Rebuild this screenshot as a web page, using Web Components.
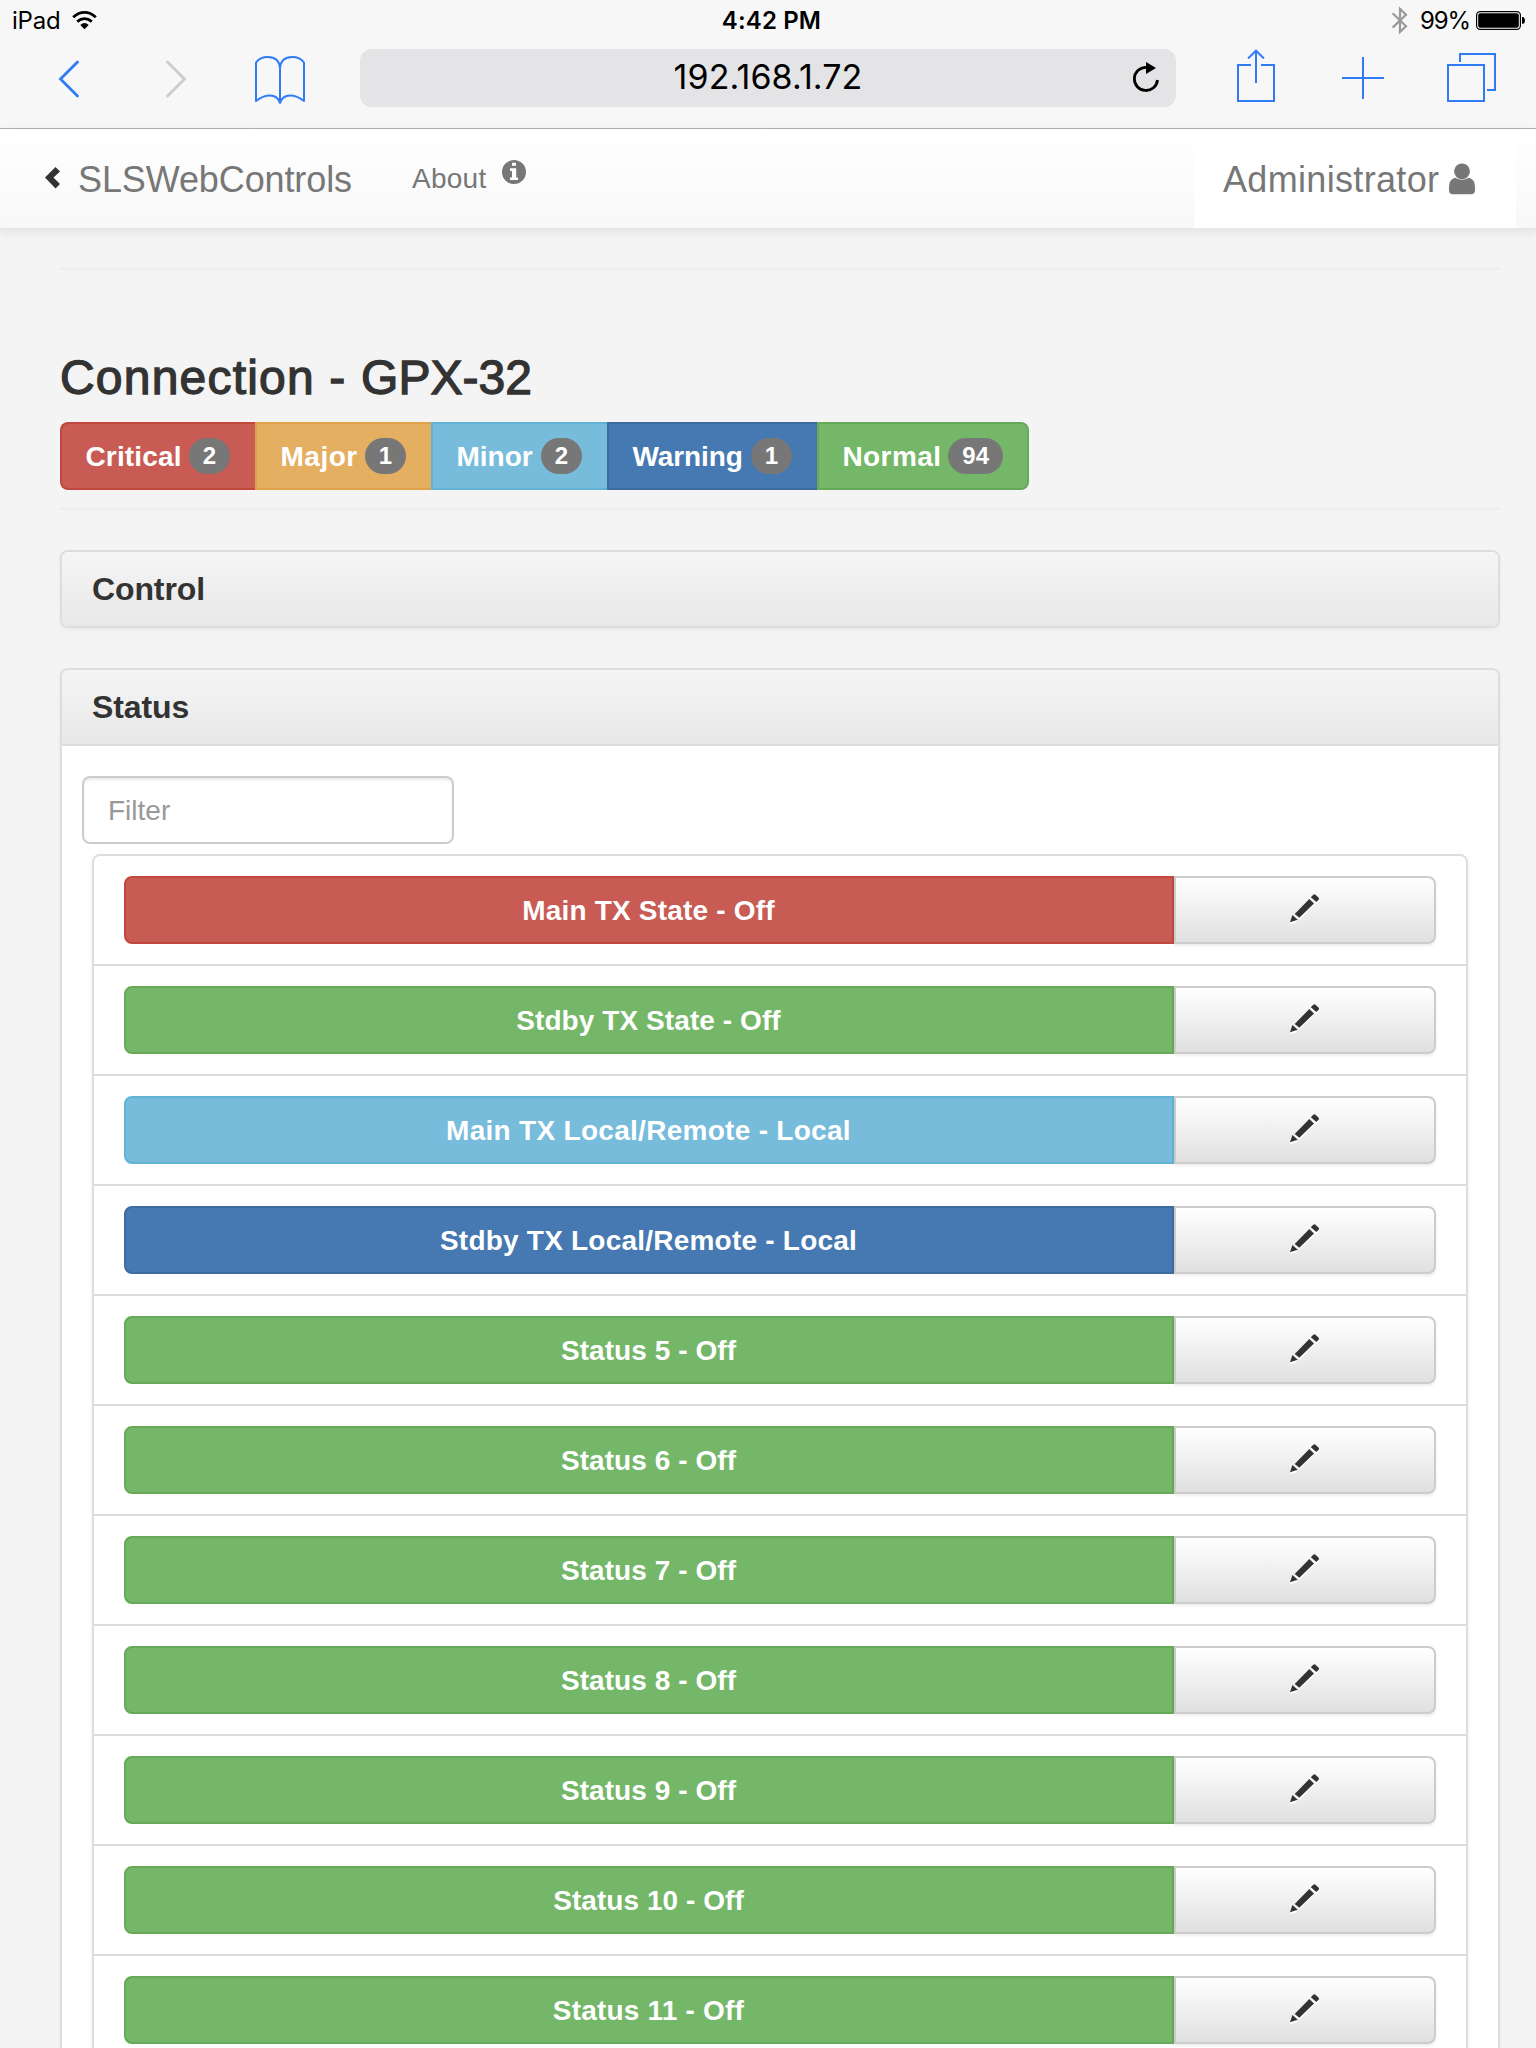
<!DOCTYPE html>
<html lang="en">
<head>
<meta charset="utf-8">
<title>SLSWebControls</title>
<style>
html,body{margin:0;padding:0}
body{width:1536px;height:2048px;overflow:hidden;background:#f4f4f4;color:#333;font-family:"Liberation Sans",Arial,sans-serif;font-size:28px}
</style>
</head>
<body>
<sls-app></sls-app>
<script>
const define = (name, html, setup) => {
  const tpl = document.createElement('template');
  tpl.innerHTML = html;
  customElements.define(name, class extends HTMLElement {
    connectedCallback() {
      if (this.shadowRoot) return;
      const root = this.attachShadow({ mode: 'open' });
      root.append(tpl.content.cloneNode(true));
      if (setup) setup(this, root);
    }
  });
};

define('ios-status-bar', `
<style>
:host{display:flex;height:40px;align-items:center;justify-content:space-between;background:#f7f7f7;color:#000;font:400 24px/40px Inter,sans-serif;white-space:pre}
.side{flex:1 1 0;display:flex;align-items:center}
.side span,.time{padding-top:2px}
.left{padding-left:12px}
.right{justify-content:flex-end;padding-right:10px}
.name{letter-spacing:-.2px;margin-right:10px}
.time{font-weight:600;letter-spacing:.15px;padding-left:5px}
.pct{letter-spacing:-1.1px;margin:0 6px 0 11px}
svg{display:block;flex:none}
</style>
<div class="side left"><span class="name">iPad</span>
<svg width="26" height="40" viewBox="71 0 26 40" fill="none" stroke="#000"><path d="M73.2 17.2Q78.5 12.4 84.5 12.4T95.8 17.2" stroke-width="2.9"/><path d="M77.2 21.6Q80.6 18.7 84.5 18.7T91.8 21.6" stroke-width="2.8"/><path d="M80.3 25Q84.5 21.2 88.7 25L84.5 29.2Z" fill="#000" stroke="none"/></svg></div>
<span class="time">4:42 PM</span>
<div class="side right">
<svg width="18" height="40" viewBox="1391 0 18 40"><path d="M1392.600 13.200L1406 26.200 1400 32V8.800L1406 14.800 1392.600 27.600" fill="none" stroke="#999" stroke-width="2.200"/></svg>
<span class="pct">99%</span>
<svg width="50" height="40" viewBox="1476 0 50 40"><rect x="1476.6" y="11.6" width="43.8" height="17.8" rx="3.6" fill="#fff" stroke="#000" stroke-width="1.2"/><rect x="1478.2" y="13.2" width="40.6" height="14.6" rx="2" fill="#000"/><path d="M1522 17h1.2q1.8 1 1.8 3.4t-1.8 3.4h-1.2z"/></svg>
</div>`);

define('safari-toolbar', `
<style>
:host{display:flex;height:88px;box-sizing:content-box;border-bottom:1px solid #b0b0b0;background:#f7f7f7;color:#000}
svg{display:block;flex:none;fill:none;stroke:#327bf6;stroke-width:2}
.url{flex:none;width:816px;height:58px;margin-top:9px;border-radius:12px;background:#e4e4e6;display:flex;align-items:center;box-sizing:border-box;padding-left:60px}
.url span{flex:1;text-align:center;font:400 34px/54px Inter,sans-serif;letter-spacing:.1px;padding:0 0 2px 0}
</style>
<svg width="130" height="88" viewBox="0 40 130 88"><path d="M77.500 62L60.500 79 77.500 96" stroke-width="2.800" stroke-linecap="round"/></svg>
<svg width="100" height="88" viewBox="130 40 100 88"><path d="M167.500 62L184.500 79 167.500 96" stroke="#ccc" stroke-width="2.800" stroke-linecap="round"/></svg>
<svg width="130" height="88" viewBox="230 40 130 88"><path d="M280 103V68Q279 57 268 57Q260 57 256 62.5V101Q263 95.6 270 95.6Q277.500 95.600 280 103Q282.5 95.6 290 95.600Q297 95.600 304 101V62.500Q300 57 292 57Q281 57 280 68" stroke-linejoin="round"/></svg>
<div class="url"><span>192.168.1.72</span>
<svg width="60" height="58" viewBox="1116 49 60 58"><path d="M1157.500 80A11.600 11.600 0 1 1 1146 67.300" stroke="#000" stroke-width="2.800"/><path d="M1146 62L1156 68 1146 74Z" fill="#000" stroke="none"/></svg></div>
<svg width="129" height="88" viewBox="1176 40 129 88"><path d="M1251 65H1238V101H1274V65H1261M1256 83V51M1248 58.500L1256 50.700 1264 58.500"/></svg>
<svg width="120" height="88" viewBox="1305 40 120 88"><path d="M1342 78H1384M1363 57V99"/></svg>
<svg width="111" height="88" viewBox="1425 40 111 88"><path d="M1448 65H1484V101H1448ZM1460 62V54H1495V90H1487"/></svg>`);

define('sls-navbar', `
<style>
:host{display:flex;height:99px;border-bottom:2px solid #e7e7e7;background:linear-gradient(#fff,#f8f8f8);box-shadow:0 2px 10px rgba(0,0,0,.075);color:#777;align-items:stretch}
.brand,.about{display:flex;align-items:center}
.brand{padding-left:45px;font-size:36px;letter-spacing:-.11px}
.brand svg{margin-bottom:2px}
.brand span{padding:2px 0 0 17px}
.about{padding-left:60px;font-size:28px;letter-spacing:.28px}
.about svg{margin:0 0 13px 15px}
.user{margin-left:auto;margin-right:20px;width:322px;box-sizing:border-box;padding-left:29px;background:#fff;display:flex;align-items:center;font-size:36px;letter-spacing:.33px}
.user span{padding-top:2px}
.user svg{margin-left:10px}
svg{display:block;flex:none}
</style>
<div class="brand"><svg width="16" height="22" viewBox="0 0 16 22"><path d="M0 10.500L10.500 0 15 4.500 8.500 10.500 15 17 10.500 21.500Z" fill="#333"/></svg><span>SLSWebControls</span></div>
<div class="about"><span>About</span><svg width="24" height="24" viewBox="0 0 24 24"><circle cx="12" cy="12" r="12" fill="#777"/><path d="M10 2.800h4v3h-4zM8 8.200h6.200v9.200h1.800v2.600H8v-2.600h2v-6.400H8z" fill="#fff"/></svg></div>
<div class="user"><span>Administrator</span><svg width="26" height="32" viewBox="0 0 26 32"><circle cx="13" cy="8.300" r="7.900" fill="#777"/><path d="M6 14.800Q13 18.800 20 14.800Q26 16.300 26 24V27.500Q26 31.200 22 31.200H4Q0 31.200 0 27.500V24Q0 16.300 6 14.800Z" fill="#777"/></svg></div>`);

const TONES = `
[tone=critical]{--bg:#c85c54;--bd:#c0483f}
[tone=major]{--bg:#e4af61;--bd:#e0a14b}
[tone=minor]{--bg:#77bcdb;--bd:#62b2d5}
[tone=warning]{--bg:#4678b1;--bd:#3f6ba0}
[tone=normal]{--bg:#74b768;--bd:#67a959}`;

define('severity-tab', `
<style>
:host{display:flex;flex:none;box-sizing:border-box;height:68px;padding-left:23.5px;align-items:center;background:var(--bg);border:2px solid var(--bd);border-right-width:0;color:#fff;font-weight:700;font-size:28px;white-space:nowrap}
:host(:first-child){border-radius:8px 0 0 8px}
:host(:last-child){border-right-width:2px;border-radius:0 8px 8px 0}
span{padding-top:2px}
b{display:block;height:36px;min-width:41px;box-sizing:border-box;padding:0 14px;border-radius:20px;background:#777;font-size:24px;line-height:36px;text-align:center;margin-left:auto;margin-right:25px}
:host(:last-child) b{margin-right:24px}
</style><span><slot></slot></span><b></b>`, (el, root) => {
  el.style.width = el.getAttribute('width') + 'px';
  el.style.letterSpacing = el.getAttribute('tracking') + 'px';
  const b = root.querySelector('b');
  b.textContent = el.getAttribute('count');
  b.style.letterSpacing = '0';
});

define('sls-panel', `
<style>
:host{display:block;box-sizing:border-box;border:2px solid #ddd;border-radius:8px;background:#fff;box-shadow:0 2px 4px rgba(0,0,0,.05)}
header{height:74px;line-height:74px;padding-left:30px;border-radius:6px;background:linear-gradient(#f5f5f5,#e8e8e8);font-size:32px;font-weight:700;letter-spacing:-.12px}
:host([open]) header{border-radius:6px 6px 0 0;border-bottom:2px solid #ddd}
</style><header></header><slot></slot>`, (el, root) => {
  root.querySelector('header').textContent = el.getAttribute('heading');
});

define('filter-field', `
<style>
:host{display:block;box-sizing:border-box;width:372px;height:68px;border:2px solid #ccc;border-radius:8px;padding-left:24px;line-height:66px;color:#999;background:#fff;box-shadow:inset 0 2px 2px rgba(0,0,0,.075)}
</style><slot></slot>`);

define('status-list', `
<style>
:host{display:flex;flex-direction:column;box-sizing:border-box;border:2px solid #ddd;border-radius:8px;box-shadow:0 2px 4px rgba(0,0,0,.05)}
</style><slot></slot>`);

define('status-row', `
<style>
${TONES}
:host{display:flex;flex:none;box-sizing:border-box;height:110px;padding:20px 30px;border-bottom:2px solid #ddd}
.state{flex:none;width:1050px;height:68px;box-sizing:border-box;border:2px solid var(--bd);border-radius:8px 0 0 8px;background:var(--bg);color:#fff;font-weight:700;font-size:28px;line-height:66px;text-align:center;white-space:pre;padding-right:1px}
.edit{flex:1;height:68px;box-sizing:border-box;border:2px solid #ccc;border-radius:0 8px 8px 0;background:linear-gradient(#fff,#e0e0e0);box-shadow:0 2px 3px rgba(0,0,0,.075);display:flex;justify-content:center;padding:16px 1px 0 0}
svg{display:block;overflow:visible;filter:drop-shadow(0 2px 0 #fff)}
</style>
<div class="state"><slot></slot></div>
<div class="edit"><svg width="29" height="29" viewBox="0 0 29 29" fill="#333"><path d="M0 28.300L2.400 21 7.700 25.800ZM4.700 20L19.300 5 24 9.600 9.300 23.800ZM20.800 3.300L23 .9Q24.200-.4 25.500.7L28.400 3.400Q29.600 4.600 28.400 5.900L26.300 8.100Z"/></svg></div>`, (el, root) => {
  const s = root.querySelector('.state');
  s.setAttribute('tone', el.getAttribute('tone'));
  s.style.letterSpacing = (el.getAttribute('tracking') || '.06') + 'px';
});

define('sls-app', `
<style>
${TONES}
:host{display:flex;flex-direction:column;height:2048px;overflow:hidden;background:#f4f4f4}
:host>*{flex:none}
main{display:flex;flex-direction:column;padding:38px 36px 0 60px}
hr{flex:none;border:0;height:2px;margin:0;width:100%;background:#eee}
h3{margin:78px 0 0;font-size:48px;line-height:60px;font-weight:400;letter-spacing:1.200px;-webkit-text-stroke:1.300px #333;height:74px}
h3 span{letter-spacing:0}
.tabs{display:flex;margin-bottom:18px}
.control{margin-top:40px}
.status{margin-top:40px;height:1500px}
.body{display:flex;flex-direction:column;padding:30px 30px 0 20px;gap:10px}
status-list{margin-left:10px}
</style>
<ios-status-bar></ios-status-bar>
<safari-toolbar></safari-toolbar>
<sls-navbar></sls-navbar>
<main>
<hr>
<h3>Connection - <span>GPX-32</span></h3>
<div class="tabs"><severity-tab tone="critical" width="195" tracking=".15" count="2">Critical</severity-tab><severity-tab tone="major" width="176" tracking=".5" count="1">Major</severity-tab><severity-tab tone="minor" width="176" tracking="0" count="2">Minor</severity-tab><severity-tab tone="warning" width="210" tracking="-.1" count="1">Warning</severity-tab><severity-tab tone="normal" width="212" tracking=".4" count="94">Normal</severity-tab></div>
<hr>
<sls-panel class="control" heading="Control"></sls-panel>
<sls-panel class="status" heading="Status" open>
<div class="body">
<filter-field>Filter</filter-field>
<status-list>
<status-row tone="critical" tracking=".19">Main TX State - Off</status-row>
<status-row tone="normal" tracking=".08">Stdby TX State - Off</status-row>
<status-row tone="minor" tracking=".29">Main TX Local/Remote - Local</status-row>
<status-row tone="warning" tracking=".22">Stdby TX Local/Remote - Local</status-row>
<status-row tone="normal">Status 5 - Off</status-row>
<status-row tone="normal">Status 6 - Off</status-row>
<status-row tone="normal">Status 7 - Off</status-row>
<status-row tone="normal">Status 8 - Off</status-row>
<status-row tone="normal">Status 9 - Off</status-row>
<status-row tone="normal">Status 10 - Off</status-row>
<status-row tone="normal" tracking=".2">Status 11 - Off</status-row>
</status-list>
</div>
</sls-panel>
</main>`);
</script>
</body>
</html>
